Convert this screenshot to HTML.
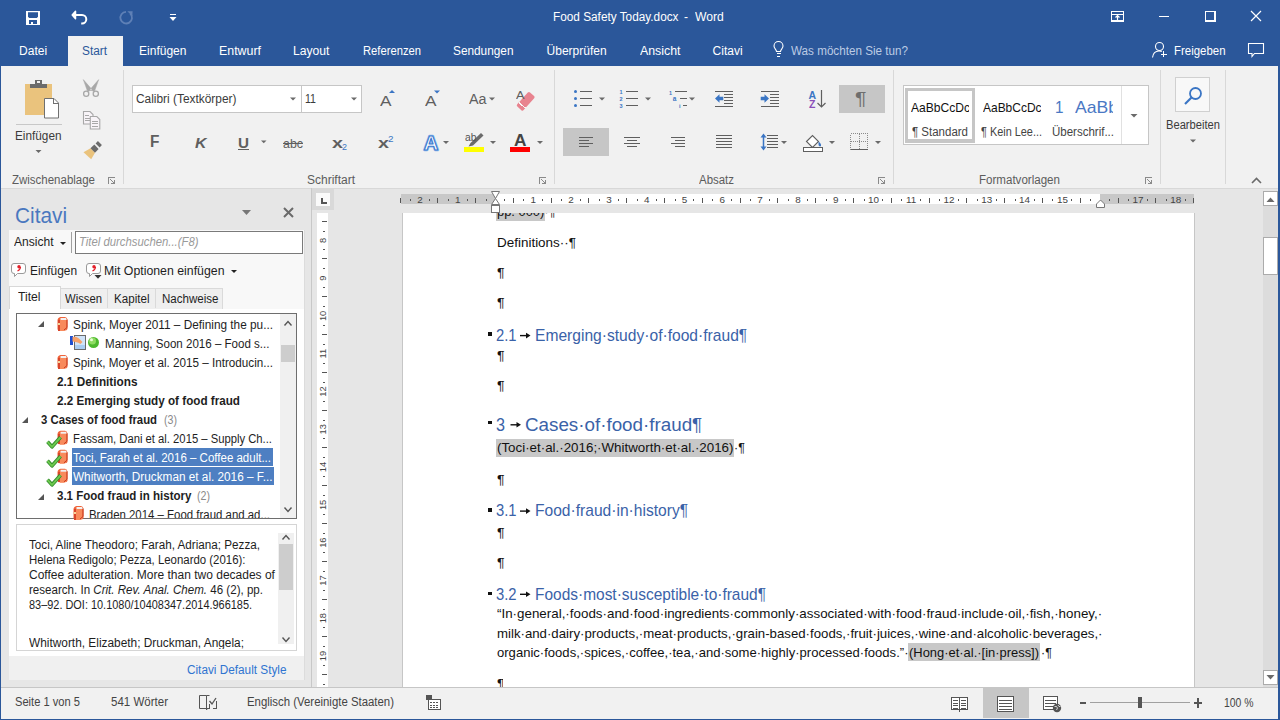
<!DOCTYPE html>
<html><head><meta charset="utf-8">
<style>
*{margin:0;padding:0;box-sizing:border-box}
html,body{width:1280px;height:720px;overflow:hidden}
body{position:relative;background:#e6e6e6;font-family:"Liberation Sans",sans-serif}
.t{position:absolute;white-space:nowrap;line-height:1;transform-origin:0 0}
.a{position:absolute}
svg.L{position:absolute;left:0;top:0}
</style></head><body>

<svg class="L" width="1280" height="720" viewBox="0 0 1280 720" shape-rendering="crispEdges"><rect x="0" y="0" width="1280" height="66" fill="#2b579a" />
<rect x="1" y="66" width="1277" height="122" fill="#f1f1f1" />
<rect x="1" y="188" width="1277" height="1" fill="#d8d8d8" />
<rect x="68" y="36" width="55" height="30" fill="#f1f1f1" />
<rect x="0" y="0" width="1" height="720" fill="#2b579a" />
<rect x="1278" y="0" width="2" height="720" fill="#2b579a" />
<rect x="0" y="719" width="1280" height="1" fill="#2b579a" />
<rect x="26" y="11" width="14" height="14" fill="#fff" />
<path d="M28 12.3h10v4.5l-1.2 1.2h-7.6l-1.2-1.2z" fill="#2b579a" shape-rendering="geometricPrecision"/>
<rect x="29" y="20" width="8" height="4" fill="#2b579a" />
<rect x="31" y="22" width="2" height="2" fill="#fff" />
<path d="M75.5 15h6.5a4.3 4.3 0 0 1 0 8.6h-0.8" fill="none" stroke="#fff" stroke-width="2" shape-rendering="geometricPrecision"/>
<path d="M75.5 11.2l-3.3 3.8l3.3 3.8z" fill="#fff" stroke="#fff" stroke-width="1.5" stroke-linejoin="round" shape-rendering="geometricPrecision"/>
<path d="M130.2 13.5a5.8 5.8 0 1 1 -4.2 -1.6" fill="none" stroke="#5f80b6" stroke-width="1.8" shape-rendering="geometricPrecision"/>
<path d="M127.3 11.2l5.3 0.1l-0.3 5z" fill="#5f80b6" shape-rendering="geometricPrecision"/>
<rect x="170" y="14" width="6" height="1.2" fill="#fff"/>
<path d="M169.5 17h7l-3.5 4z" fill="#fff" shape-rendering="geometricPrecision"/>
<rect x="1111.5" y="11.5" width="12" height="9.5" fill="none" stroke="#fff" stroke-width="1.2"/>
<rect x="1111" y="13.5" width="13" height="1.2" fill="#fff"/>
<path d="M1117.5 20.5v-5M1115.5 17.5l2-2l2 2" fill="none" stroke="#fff" stroke-width="1.2" shape-rendering="geometricPrecision"/>
<rect x="1159" y="16" width="10" height="1.2" fill="#fff"/>
<rect x="1205.5" y="11.5" width="9.5" height="9.5" fill="none" stroke="#fff" stroke-width="1.1"/>
<path d="M1251 11l10 10M1261 11l-10 10" stroke="#fff" stroke-width="1.2" shape-rendering="geometricPrecision"/>
<path d="M776.5 51.5c0-2-2.5-3-2.5-5.5a4.5 4.5 0 0 1 9 0c0 2.5-2.5 3.5-2.5 5.5z" fill="none" stroke="#fff" stroke-width="1.1" shape-rendering="geometricPrecision"/>
<rect x="776.5" y="53" width="4" height="1.1" fill="#fff"/><rect x="777" y="55.5" width="3" height="1.1" fill="#fff"/>
<circle cx="1159.5" cy="46.5" r="4" fill="none" stroke="#fff" stroke-width="1.1" shape-rendering="geometricPrecision"/>
<path d="M1152.5 57.5c0.5-4 3-6.5 6.5-6.5c1 0 2 0.2 2.8 0.6" fill="none" stroke="#fff" stroke-width="1.1" shape-rendering="geometricPrecision"/>
<rect x="1160.5" y="53.5" width="6" height="1.1" fill="#fff"/><rect x="1163" y="51" width="1.1" height="6" fill="#fff"/>
<path d="M1248.5 43.5h15v10h-9l-2.5 3v-3h-3.5z" fill="none" stroke="#fff" stroke-width="1.1" shape-rendering="geometricPrecision"/>
<rect x="123" y="70" width="1" height="114" fill="#d8d8d8" />
<rect x="554" y="70" width="1" height="114" fill="#d8d8d8" />
<rect x="893" y="70" width="1" height="114" fill="#d8d8d8" />
<rect x="1160" y="70" width="1" height="114" fill="#d8d8d8" />
<rect x="1225" y="70" width="1" height="114" fill="#d8d8d8" />
<path d="M108.5 183.5v-6h6" fill="none" stroke="#8a8a8a" stroke-width="1"/>
<path d="M110.5 179.5l3.5 3.5M114.5 180v3.5h-3.5" fill="none" stroke="#8a8a8a" stroke-width="1"/>
<path d="M539.5 183.5v-6h6" fill="none" stroke="#8a8a8a" stroke-width="1"/>
<path d="M541.5 179.5l3.5 3.5M545.5 180v3.5h-3.5" fill="none" stroke="#8a8a8a" stroke-width="1"/>
<path d="M878.5 183.5v-6h6" fill="none" stroke="#8a8a8a" stroke-width="1"/>
<path d="M880.5 179.5l3.5 3.5M884.5 180v3.5h-3.5" fill="none" stroke="#8a8a8a" stroke-width="1"/>
<path d="M1145.5 183.5v-6h6" fill="none" stroke="#8a8a8a" stroke-width="1"/>
<path d="M1147.5 179.5l3.5 3.5M1151.5 180v3.5h-3.5" fill="none" stroke="#8a8a8a" stroke-width="1"/>
<rect x="25" y="84" width="27" height="31" fill="#eac37d"/>
<rect x="30" y="84" width="17" height="4" fill="#6b6b6b"/>
<rect x="35" y="80" width="7" height="5" fill="#6b6b6b"/><rect x="37" y="81" width="3" height="2" fill="#f1f1f1"/>
<path d="M44.5 98.5h9.5l4.5 4.5v15h-14z" fill="#fff" stroke="#707070" stroke-width="1" shape-rendering="geometricPrecision"/>
<path d="M53.5 98.5v5h5" fill="none" stroke="#707070" stroke-width="1"/>
<rect x="16" y="124" width="46" height="1" fill="#c8c8c8" />
<path d="M35.5 150h6l-3 3z" fill="#6a6a6a" shape-rendering="geometricPrecision"/>
<g fill="none" stroke="#a8a8a8" stroke-width="1.3" shape-rendering="geometricPrecision"><circle cx="86.2" cy="93.8" r="2.6"/><circle cx="95.8" cy="93.8" r="2.6"/></g>
<path d="M87.6 91.6L83.3 79.6L92.2 89.8ZM94.4 91.6L98.7 79.6L89.8 89.8Z" fill="#a8a8a8" stroke="#a8a8a8" stroke-width="0.5" stroke-linejoin="round" shape-rendering="geometricPrecision"/>
<g fill="#f8f4f8" stroke="#a8a8a8" stroke-width="1.1" shape-rendering="geometricPrecision"><path d="M83.5 111.5h6.5l3 3v9.5h-9.5z"/><path d="M90.3 116.5h6.5l3 3v9.5h-9.5z"/></g>
<g stroke="#a8a8a8" stroke-width="1"><path d="M85 115.5h4M85 118h4.5M85 120.5h4.5M92 121h6M92 123.5h6M92 126h6"/></g>
<path d="M83.5 152.3L90.5 148.3L95 152.8L91.2 159.2Z" fill="#eac37d" shape-rendering="geometricPrecision"/>
<path d="M90.5 148.3L94.3 144.6L98.6 148.9L95 152.8Z" fill="#6b6b6b" shape-rendering="geometricPrecision"/>
<path d="M95.6 143.4L97.9 141.1L101.9 145.1L99.6 147.4Z" fill="#6b6b6b" shape-rendering="geometricPrecision"/>
<rect x="132.5" y="85.5" width="169" height="27" fill="#fff" stroke="#c6c6c6"/>
<rect x="301.5" y="85.5" width="60" height="27" fill="#fff" stroke="#c6c6c6"/>
<path d="M290 97.5h6l-3 3z" fill="#6a6a6a" shape-rendering="geometricPrecision"/><path d="M351 97.5h6l-3 3z" fill="#6a6a6a" shape-rendering="geometricPrecision"/>
<path d="M389 93h6l-3-3z" fill="#3a75c4" shape-rendering="geometricPrecision"/>
<path d="M434 90.5h6l-3 3z" fill="#3a75c4" shape-rendering="geometricPrecision"/>
<path d="M489 97.5h6l-3 3z" fill="#6a6a6a" shape-rendering="geometricPrecision"/>
<g transform="translate(525.7 101.3) rotate(-48)"><rect x="-9.5" y="-4.3" width="19" height="8.6" rx="1.6" fill="#e8838f" shape-rendering="geometricPrecision"/><rect x="-6" y="-4.3" width="1.3" height="8.6" fill="#f6f6f6"/></g>
<rect x="238" y="149" width="11" height="1.2" fill="#5f5f5f" />
<path d="M261 140.5h5.5l-2.75 2.75z" fill="#6a6a6a" shape-rendering="geometricPrecision"/>
<rect x="283" y="143" width="20" height="1.3" fill="#5f5f5f" />
<text x="423.8" y="149.5" font-family="Liberation Sans" font-size="20" font-weight="700" fill="#fff" stroke="#8dbaf0" stroke-width="2.4" stroke-linejoin="round" textLength="14.5" lengthAdjust="spacingAndGlyphs" shape-rendering="geometricPrecision">A</text>
<text x="423.8" y="149.5" font-family="Liberation Sans" font-size="20" font-weight="700" fill="#fff" stroke="#3c78cc" stroke-width="1.1" stroke-linejoin="round" textLength="14.5" lengthAdjust="spacingAndGlyphs" shape-rendering="geometricPrecision">A</text>
<path d="M443 141h6l-3 3z" fill="#6a6a6a" shape-rendering="geometricPrecision"/>
<path d="M468.5 146.5l2-3.5l10.5-10l2.5 2.5l-10.5 10z" fill="#6b6b6b" shape-rendering="geometricPrecision"/>
<rect x="464" y="147" width="20" height="5" fill="#ffff00" />
<path d="M490 141h6l-3 3z" fill="#6a6a6a" shape-rendering="geometricPrecision"/>
<rect x="510" y="147" width="20" height="5" fill="#ff0000" />
<path d="M537 141h6l-3 3z" fill="#6a6a6a" shape-rendering="geometricPrecision"/>
<circle cx="575.5" cy="91.5" r="1.5" fill="#3a75c4" shape-rendering="geometricPrecision"/>
<rect x="580" y="91" width="12" height="1" fill="#5f5f5f" />
<circle cx="575.5" cy="98.5" r="1.5" fill="#3a75c4" shape-rendering="geometricPrecision"/>
<rect x="580" y="98" width="12" height="1" fill="#5f5f5f" />
<circle cx="575.5" cy="105.5" r="1.5" fill="#3a75c4" shape-rendering="geometricPrecision"/>
<rect x="580" y="105" width="12" height="1" fill="#5f5f5f" />
<path d="M599 97.5h6l-3 3z" fill="#6a6a6a" shape-rendering="geometricPrecision"/>
<text x="619.5" y="94" font-family="Liberation Sans" font-size="5.5" font-weight="700" fill="#3a75c4">1</text>
<rect x="626" y="91" width="12" height="1" fill="#5f5f5f" />
<text x="619.5" y="101" font-family="Liberation Sans" font-size="5.5" font-weight="700" fill="#3a75c4">2</text>
<rect x="626" y="98" width="12" height="1" fill="#5f5f5f" />
<text x="619.5" y="108" font-family="Liberation Sans" font-size="5.5" font-weight="700" fill="#3a75c4">3</text>
<rect x="626" y="105" width="12" height="1" fill="#5f5f5f" />
<path d="M645 97.5h6l-3 3z" fill="#6a6a6a" shape-rendering="geometricPrecision"/>
<text x="669" y="94.5" font-family="Liberation Sans" font-size="5.5" font-weight="700" fill="#3a75c4">1</text>
<text x="672.8" y="101" font-family="Liberation Sans" font-size="6.5" font-weight="700" fill="#3a75c4">a</text>
<text x="679" y="107.5" font-family="Liberation Sans" font-size="5.5" font-weight="700" fill="#3a75c4">i</text>
<rect x="675" y="91" width="12" height="1" fill="#5f5f5f" />
<rect x="680" y="98" width="7" height="1" fill="#5f5f5f" />
<rect x="683" y="105" width="4" height="1" fill="#5f5f5f" />
<path d="M689 97.5h6l-3 3z" fill="#6a6a6a" shape-rendering="geometricPrecision"/>
<rect x="715" y="91" width="18" height="1" fill="#5f5f5f" />
<rect x="724" y="94" width="9" height="1" fill="#5f5f5f" />
<rect x="724" y="97" width="9" height="1" fill="#5f5f5f" />
<rect x="724" y="100" width="9" height="1" fill="#5f5f5f" />
<rect x="724" y="103" width="9" height="1" fill="#5f5f5f" />
<rect x="715" y="106" width="18" height="1" fill="#5f5f5f" />
<path d="M715 98.5l4.5-4.2v2.5h3.8v3.4h-3.8v2.5z" fill="#3a75c4" shape-rendering="geometricPrecision"/>
<rect x="761" y="91" width="18" height="1" fill="#5f5f5f" />
<rect x="770" y="94" width="9" height="1" fill="#5f5f5f" />
<rect x="770" y="97" width="9" height="1" fill="#5f5f5f" />
<rect x="770" y="100" width="9" height="1" fill="#5f5f5f" />
<rect x="770" y="103" width="9" height="1" fill="#5f5f5f" />
<rect x="761" y="106" width="18" height="1" fill="#5f5f5f" />
<path d="M769 98.5l-4.5-4.2v2.5h-3.8v3.4h3.8v2.5z" fill="#3a75c4" shape-rendering="geometricPrecision"/>
<text x="808.6" y="98.5" font-family="Liberation Sans" font-size="10.5" font-weight="700" fill="#3a75c4">A</text>
<text x="809" y="108.2" font-family="Liberation Sans" font-size="10.5" font-weight="700" fill="#8a4fb8">Z</text>
<path d="M821.5 90v17M817.5 103l4 4l4-4" fill="none" stroke="#5f5f5f" stroke-width="1.2" shape-rendering="geometricPrecision"/>
<rect x="839" y="85" width="46" height="28" fill="#c6c6c6" />
<rect x="563" y="128" width="46" height="28" fill="#c6c6c6" />
<rect x="579" y="136" width="0" height="1" fill="#5f5f5f" />
<rect x="579" y="139" width="0" height="1" fill="#5f5f5f" />
<rect x="579" y="142" width="0" height="1" fill="#5f5f5f" />
<rect x="579" y="145" width="0" height="1" fill="#5f5f5f" />
<rect x="579" y="137" width="14" height="1" fill="#5f5f5f" />
<rect x="579" y="140" width="10" height="1" fill="#5f5f5f" />
<rect x="579" y="143" width="14" height="1" fill="#5f5f5f" />
<rect x="579" y="146" width="10" height="1" fill="#5f5f5f" />
<rect x="624" y="137" width="16" height="1" fill="#5f5f5f" />
<rect x="627" y="140" width="10" height="1" fill="#5f5f5f" />
<rect x="624" y="143" width="16" height="1" fill="#5f5f5f" />
<rect x="627" y="146" width="10" height="1" fill="#5f5f5f" />
<rect x="671" y="137" width="14" height="1" fill="#5f5f5f" />
<rect x="675" y="140" width="10" height="1" fill="#5f5f5f" />
<rect x="671" y="143" width="14" height="1" fill="#5f5f5f" />
<rect x="675" y="146" width="10" height="1" fill="#5f5f5f" />
<rect x="716" y="135" width="16" height="1" fill="#5f5f5f" />
<rect x="716" y="138" width="16" height="1" fill="#5f5f5f" />
<rect x="716" y="141" width="16" height="1" fill="#5f5f5f" />
<rect x="716" y="144" width="16" height="1" fill="#5f5f5f" />
<rect x="716" y="147" width="16" height="1" fill="#5f5f5f" />
<path d="M763.5 136v12" fill="none" stroke="#3a75c4" stroke-width="1.5" shape-rendering="geometricPrecision"/>
<path d="M760.5 137.5l3-4l3 4zM760.5 146.5l3 4l3-4z" fill="#3a75c4" shape-rendering="geometricPrecision"/>
<rect x="767" y="135" width="11" height="1" fill="#5f5f5f" />
<rect x="767" y="138" width="11" height="1" fill="#5f5f5f" />
<rect x="767" y="141" width="11" height="1" fill="#5f5f5f" />
<rect x="767" y="144" width="11" height="1" fill="#5f5f5f" />
<rect x="767" y="147" width="11" height="1" fill="#5f5f5f" />
<path d="M781 141h6l-3 3z" fill="#6a6a6a" shape-rendering="geometricPrecision"/>
<path d="M806.5 141.5l6-6l6 6l-6 6z" fill="#fff" stroke="#5f5f5f" stroke-width="1.1" shape-rendering="geometricPrecision"/>
<path d="M818.5 141.5c1.5 1 3 3 2.5 4.5c-1 1-2.5 0-2.5-1.5z" fill="#3a75c4" shape-rendering="geometricPrecision"/>
<rect x="803.5" y="147.5" width="19" height="3.5" fill="#fff" stroke="#5f5f5f" stroke-width="1"/>
<path d="M829 141h6l-3 3z" fill="#6a6a6a" shape-rendering="geometricPrecision"/>
<rect x="850.5" y="133.5" width="17" height="16" fill="none" stroke="#8a8a8a" stroke-width="1" stroke-dasharray="1 1"/>
<path d="M859 134v16M851 141.5h17" stroke="#8a8a8a" stroke-width="1" stroke-dasharray="1 1"/>
<path d="M850.5 149.5h17.5" stroke="#5f5f5f" stroke-width="1"/>
<path d="M875 141h6l-3 3z" fill="#6a6a6a" shape-rendering="geometricPrecision"/>
<rect x="903.5" y="85.5" width="245" height="59" fill="#fff" stroke="#c6c6c6"/>
<rect x="1121" y="86" width="1" height="58" fill="#e1e1e1" />
<rect x="906.5" y="89.5" width="67" height="51.5" fill="none" stroke="#c6c6c6" stroke-width="3.2"/>
<path d="M1130.5 114h7l-3.5 3.5z" fill="#6a6a6a" shape-rendering="geometricPrecision"/>
<rect x="1175.5" y="77.5" width="34" height="34" fill="#f8f8f8" stroke="#d0d0d0"/>
<circle cx="1195.5" cy="93.5" r="5.5" fill="none" stroke="#3a75c4" stroke-width="1.8" shape-rendering="geometricPrecision"/>
<path d="M1191.5 97.5l-6.5 6.5" stroke="#3a75c4" stroke-width="2.2" shape-rendering="geometricPrecision"/>
<path d="M1190 139.5h6l-3 3z" fill="#6a6a6a" shape-rendering="geometricPrecision"/>
<path d="M1252 183l4.5-4.5l4.5 4.5" fill="none" stroke="#6a6a6a" stroke-width="1.6" shape-rendering="geometricPrecision"/>
<rect x="311" y="188" width="1" height="499" fill="#c8c8c8" />
<path d="M242 210h9l-4.5 5z" fill="#777" shape-rendering="geometricPrecision"/>
<path d="M284 208l9 9M293 208l-9 9" stroke="#6a6a6a" stroke-width="2" shape-rendering="geometricPrecision"/>
<rect x="9" y="230" width="295" height="426" fill="#f8f8f8" />
<path d="M60 242h6l-3 3z" fill="#222" shape-rendering="geometricPrecision"/>
<rect x="71" y="232" width="1" height="21" fill="#a0a0a0" />
<rect x="75.5" y="231.5" width="227" height="22" fill="#fff" stroke="#7a7a7a"/>
<path d="M14 263.5h9a2.5 2.5 0 0 1 2.5 2.5v5a2.5 2.5 0 0 1 -2.5 2.5h-5.5l-3 3v-3h-0.5a2.5 2.5 0 0 1 -2.5 -2.5v-5a2.5 2.5 0 0 1 2.5 -2.5z" fill="#fff" stroke="#9a9a9a" stroke-width="1" shape-rendering="geometricPrecision"/>
<circle cx="19" cy="266.8" r="1.7" fill="#e3202a" shape-rendering="geometricPrecision"/>
<path d="M20.5 267q0 2.5-3 4" fill="none" stroke="#e3202a" stroke-width="1.2" shape-rendering="geometricPrecision"/>
<path d="M89 263.5h9a2.5 2.5 0 0 1 2.5 2.5v5a2.5 2.5 0 0 1 -2.5 2.5h-5.5l-3 3v-3h-0.5a2.5 2.5 0 0 1 -2.5 -2.5v-5a2.5 2.5 0 0 1 2.5 -2.5z" fill="#fff" stroke="#9a9a9a" stroke-width="1" shape-rendering="geometricPrecision"/>
<circle cx="94" cy="266.8" r="1.7" fill="#e3202a" shape-rendering="geometricPrecision"/>
<path d="M95.5 267q0 2.5-3 4" fill="none" stroke="#e3202a" stroke-width="1.2" shape-rendering="geometricPrecision"/>
<path d="M94.5 275h7l-3.5 3.7z" fill="#333" shape-rendering="geometricPrecision"/>
<path d="M231 270h6l-3 3z" fill="#222" shape-rendering="geometricPrecision"/>
<rect x="60" y="288" width="163" height="21" fill="#efefef" />
<path d="M60.5 308.5v-20h162v20" fill="none" stroke="#dadada"/>
<rect x="107" y="289" width="1" height="19" fill="#dadada" />
<rect x="155" y="289" width="1" height="19" fill="#dadada" />
<path d="M9.5 309v-22.5h51v22.5" fill="#fff" stroke="#d8d8d8"/>
<rect x="10" y="287" width="50" height="23" fill="#fff" />
<rect x="9" y="309" width="295" height="347" fill="#fff" />
<rect x="16.5" y="313.5" width="280" height="205" fill="#fff" stroke="#6e6e6e"/>
<rect x="280" y="314" width="16" height="204" fill="#f0f0f0" />
<rect x="281" y="345" width="14" height="17" fill="#cdcdcd" />
<path d="M284.5 325.5l3.5-4l3.5 4" fill="none" stroke="#555" stroke-width="1.4" shape-rendering="geometricPrecision"/>
<path d="M284.5 507.5l3.5 4l3.5-4" fill="none" stroke="#555" stroke-width="1.4" shape-rendering="geometricPrecision"/>
<rect x="72" y="448" width="201" height="18" fill="#4e7fc2" />
<rect x="72" y="467" width="202" height="18" fill="#4e7fc2" />
<path d="M44 321v6h-6z" fill="#555" shape-rendering="geometricPrecision"/>
<path d="M57.5 320.5q0-3 3-3.5h4.5q2.5 0.3 2.5 3v9q-0.5 1.5-3 1.5h-4q-3 0-3-1.5z" fill="#f0643a" shape-rendering="geometricPrecision"/>
<path d="M60 320h6.5v9.5l-2.5 1.5h-4z" fill="#f88a5c" shape-rendering="geometricPrecision"/>
<path d="M60.5 318h5.5l1 2h-6.5z" fill="#f2f2f2" shape-rendering="geometricPrecision"/>
<rect x="58" y="320" width="2" height="10.5" fill="#d9452a"/>
<rect x="58" y="323" width="2" height="2" fill="#f6d39a"/>
<path d="M64 330l3-2.5v-8" fill="none" stroke="#c53a1e" stroke-width="1" shape-rendering="geometricPrecision"/>
<rect x="74.5" y="335.5" width="11" height="14" fill="#cfe3f8" stroke="#6a6a6a" shape-rendering="geometricPrecision"/>
<rect x="75" y="345" width="10" height="4" fill="#a9cdf2"/>
<rect x="70" y="336" width="2.5" height="9" fill="#1f4fd0" />
<path d="M72.5 337c3-1 6 0 10 5l-2 2c-3-2-5-2-8-2.5z" fill="#f7a26a" shape-rendering="geometricPrecision"/>
<circle cx="93.5" cy="342.5" r="5.5" fill="#4cb82e" shape-rendering="geometricPrecision"/>
<circle cx="92.5" cy="341" r="3.5" fill="#8edc62" shape-rendering="geometricPrecision"/>
<circle cx="91.5" cy="339.8" r="1.5" fill="#e8fbd8" shape-rendering="geometricPrecision"/>
<path d="M57.5 358.5q0-3 3-3.5h4.5q2.5 0.3 2.5 3v9q-0.5 1.5-3 1.5h-4q-3 0-3-1.5z" fill="#f0643a" shape-rendering="geometricPrecision"/>
<path d="M60 358h6.5v9.5l-2.5 1.5h-4z" fill="#f88a5c" shape-rendering="geometricPrecision"/>
<path d="M60.5 356h5.5l1 2h-6.5z" fill="#f2f2f2" shape-rendering="geometricPrecision"/>
<rect x="58" y="358" width="2" height="10.5" fill="#d9452a"/>
<rect x="58" y="361" width="2" height="2" fill="#f6d39a"/>
<path d="M64 368l3-2.5v-8" fill="none" stroke="#c53a1e" stroke-width="1" shape-rendering="geometricPrecision"/>
<path d="M28 417v6h-6z" fill="#555" shape-rendering="geometricPrecision"/>
<path d="M57.5 434.3q0-3 3-3.5h4.5q2.5 0.3 2.5 3v9q-0.5 1.5-3 1.5h-4q-3 0-3-1.5z" fill="#f0643a" shape-rendering="geometricPrecision"/>
<path d="M60 433.8h6.5v9.5l-2.5 1.5h-4z" fill="#f88a5c" shape-rendering="geometricPrecision"/>
<path d="M60.5 431.8h5.5l1 2h-6.5z" fill="#f2f2f2" shape-rendering="geometricPrecision"/>
<rect x="58" y="433.8" width="2" height="10.5" fill="#d9452a"/>
<rect x="58" y="436.8" width="2" height="2" fill="#f6d39a"/>
<path d="M64 443.8l3-2.5v-8" fill="none" stroke="#c53a1e" stroke-width="1" shape-rendering="geometricPrecision"/>
<path d="M47.5 441.8l4.5 5l8.5-9.5" fill="none" stroke="#2f8a2a" stroke-width="3.6" stroke-linejoin="round" shape-rendering="geometricPrecision"/>
<path d="M47.5 441.8l4.5 5l8.5-9.5" fill="none" stroke="#6cc84e" stroke-width="2" stroke-linejoin="round" shape-rendering="geometricPrecision"/>
<path d="M57.5 453.3q0-3 3-3.5h4.5q2.5 0.3 2.5 3v9q-0.5 1.5-3 1.5h-4q-3 0-3-1.5z" fill="#f0643a" shape-rendering="geometricPrecision"/>
<path d="M60 452.8h6.5v9.5l-2.5 1.5h-4z" fill="#f88a5c" shape-rendering="geometricPrecision"/>
<path d="M60.5 450.8h5.5l1 2h-6.5z" fill="#f2f2f2" shape-rendering="geometricPrecision"/>
<rect x="58" y="452.8" width="2" height="10.5" fill="#d9452a"/>
<rect x="58" y="455.8" width="2" height="2" fill="#f6d39a"/>
<path d="M64 462.8l3-2.5v-8" fill="none" stroke="#c53a1e" stroke-width="1" shape-rendering="geometricPrecision"/>
<path d="M47.5 460.8l4.5 5l8.5-9.5" fill="none" stroke="#2f8a2a" stroke-width="3.6" stroke-linejoin="round" shape-rendering="geometricPrecision"/>
<path d="M47.5 460.8l4.5 5l8.5-9.5" fill="none" stroke="#6cc84e" stroke-width="2" stroke-linejoin="round" shape-rendering="geometricPrecision"/>
<path d="M57.5 472.3q0-3 3-3.5h4.5q2.5 0.3 2.5 3v9q-0.5 1.5-3 1.5h-4q-3 0-3-1.5z" fill="#f0643a" shape-rendering="geometricPrecision"/>
<path d="M60 471.8h6.5v9.5l-2.5 1.5h-4z" fill="#f88a5c" shape-rendering="geometricPrecision"/>
<path d="M60.5 469.8h5.5l1 2h-6.5z" fill="#f2f2f2" shape-rendering="geometricPrecision"/>
<rect x="58" y="471.8" width="2" height="10.5" fill="#d9452a"/>
<rect x="58" y="474.8" width="2" height="2" fill="#f6d39a"/>
<path d="M64 481.8l3-2.5v-8" fill="none" stroke="#c53a1e" stroke-width="1" shape-rendering="geometricPrecision"/>
<path d="M47.5 479.8l4.5 5l8.5-9.5" fill="none" stroke="#2f8a2a" stroke-width="3.6" stroke-linejoin="round" shape-rendering="geometricPrecision"/>
<path d="M47.5 479.8l4.5 5l8.5-9.5" fill="none" stroke="#6cc84e" stroke-width="2" stroke-linejoin="round" shape-rendering="geometricPrecision"/>
<path d="M44 494v6h-6z" fill="#555" shape-rendering="geometricPrecision"/>
<path d="M73.5 509.5q0-3 3-3.5h4.5q2.5 0.3 2.5 3v9q-0.5 1.5-3 1.5h-4q-3 0-3-1.5z" fill="#f0643a" shape-rendering="geometricPrecision"/>
<path d="M76 509h6.5v9.5l-2.5 1.5h-4z" fill="#f88a5c" shape-rendering="geometricPrecision"/>
<path d="M76.5 507h5.5l1 2h-6.5z" fill="#f2f2f2" shape-rendering="geometricPrecision"/>
<rect x="74" y="509" width="2" height="10.5" fill="#d9452a"/>
<rect x="74" y="512" width="2" height="2" fill="#f6d39a"/>
<path d="M80 519l3-2.5v-8" fill="none" stroke="#c53a1e" stroke-width="1" shape-rendering="geometricPrecision"/>
<rect x="16.5" y="524.5" width="280" height="126" fill="#fff" stroke="#d5d5d5"/>
<rect x="278" y="533" width="16" height="111" fill="#f0f0f0" />
<rect x="279" y="544" width="14" height="46" fill="#cdcdcd" />
<path d="M282.5 539.5l3.5-4l3.5 4" fill="none" stroke="#555" stroke-width="1.4" shape-rendering="geometricPrecision"/>
<path d="M282.5 637.5l3.5 4l3.5-4" fill="none" stroke="#555" stroke-width="1.4" shape-rendering="geometricPrecision"/>
<rect x="9" y="656" width="295" height="24" fill="#f0f0f0" />
<rect x="304" y="230" width="1" height="450" fill="#dcdcdc" />
<rect x="312" y="189" width="22" height="21" fill="#d9d9d9" />
<rect x="316" y="193" width="14" height="13" fill="#fafafa" />
<rect x="321" y="198" width="2" height="6" fill="#555" />
<rect x="321" y="202" width="6" height="2" fill="#555" />
<rect x="402" y="213" width="793" height="474" fill="#c6c6c6" />
<rect x="403" y="213" width="791" height="474" fill="#fff" />
<rect x="401" y="194" width="94.5" height="10" fill="#c8c8c8" />
<rect x="495.5" y="194" width="604.8" height="10" fill="#fff" />
<rect x="1100.3" y="194" width="93.7" height="10" fill="#c8c8c8" />
<rect x="400" y="198" width="1" height="5" fill="#555" />
<rect x="410" y="198.5" width="1" height="2" fill="#555" />
<text x="419.9" y="203" font-family="Liberation Sans" font-size="9.9" fill="#444" text-anchor="middle">2</text>
<rect x="429" y="198.5" width="1" height="2" fill="#555" />
<rect x="437" y="198" width="1" height="5" fill="#555" />
<rect x="448" y="198.5" width="1" height="2" fill="#555" />
<text x="457.7" y="203" font-family="Liberation Sans" font-size="9.9" fill="#444" text-anchor="middle">1</text>
<rect x="467" y="198.5" width="1" height="2" fill="#555" />
<rect x="475" y="198" width="1" height="5" fill="#555" />
<rect x="486" y="198.5" width="1" height="2" fill="#555" />
<rect x="504" y="198.5" width="1" height="2" fill="#555" />
<rect x="513" y="198" width="1" height="5" fill="#555" />
<rect x="523" y="198.5" width="1" height="2" fill="#555" />
<text x="533.3" y="203" font-family="Liberation Sans" font-size="9.9" fill="#444" text-anchor="middle">1</text>
<rect x="542" y="198.5" width="1" height="2" fill="#555" />
<rect x="551" y="198" width="1" height="5" fill="#555" />
<rect x="561" y="198.5" width="1" height="2" fill="#555" />
<text x="571.1" y="203" font-family="Liberation Sans" font-size="9.9" fill="#444" text-anchor="middle">2</text>
<rect x="580" y="198.5" width="1" height="2" fill="#555" />
<rect x="588" y="198" width="1" height="5" fill="#555" />
<rect x="599" y="198.5" width="1" height="2" fill="#555" />
<text x="608.9" y="203" font-family="Liberation Sans" font-size="9.9" fill="#444" text-anchor="middle">3</text>
<rect x="618" y="198.5" width="1" height="2" fill="#555" />
<rect x="626" y="198" width="1" height="5" fill="#555" />
<rect x="637" y="198.5" width="1" height="2" fill="#555" />
<text x="646.7" y="203" font-family="Liberation Sans" font-size="9.9" fill="#444" text-anchor="middle">4</text>
<rect x="656" y="198.5" width="1" height="2" fill="#555" />
<rect x="664" y="198" width="1" height="5" fill="#555" />
<rect x="675" y="198.5" width="1" height="2" fill="#555" />
<text x="684.5" y="203" font-family="Liberation Sans" font-size="9.9" fill="#444" text-anchor="middle">5</text>
<rect x="693" y="198.5" width="1" height="2" fill="#555" />
<rect x="702" y="198" width="1" height="5" fill="#555" />
<rect x="712" y="198.5" width="1" height="2" fill="#555" />
<text x="722.3" y="203" font-family="Liberation Sans" font-size="9.9" fill="#444" text-anchor="middle">6</text>
<rect x="731" y="198.5" width="1" height="2" fill="#555" />
<rect x="740" y="198" width="1" height="5" fill="#555" />
<rect x="750" y="198.5" width="1" height="2" fill="#555" />
<text x="760.1" y="203" font-family="Liberation Sans" font-size="9.9" fill="#444" text-anchor="middle">7</text>
<rect x="769" y="198.5" width="1" height="2" fill="#555" />
<rect x="777" y="198" width="1" height="5" fill="#555" />
<rect x="788" y="198.5" width="1" height="2" fill="#555" />
<text x="797.9" y="203" font-family="Liberation Sans" font-size="9.9" fill="#444" text-anchor="middle">8</text>
<rect x="807" y="198.5" width="1" height="2" fill="#555" />
<rect x="815" y="198" width="1" height="5" fill="#555" />
<rect x="826" y="198.5" width="1" height="2" fill="#555" />
<text x="835.7" y="203" font-family="Liberation Sans" font-size="9.9" fill="#444" text-anchor="middle">9</text>
<rect x="845" y="198.5" width="1" height="2" fill="#555" />
<rect x="853" y="198" width="1" height="5" fill="#555" />
<rect x="864" y="198.5" width="1" height="2" fill="#555" />
<text x="873.5" y="203" font-family="Liberation Sans" font-size="9.9" fill="#444" text-anchor="middle">10</text>
<rect x="882" y="198.5" width="1" height="2" fill="#555" />
<rect x="891" y="198" width="1" height="5" fill="#555" />
<rect x="901" y="198.5" width="1" height="2" fill="#555" />
<text x="911.2" y="203" font-family="Liberation Sans" font-size="9.9" fill="#444" text-anchor="middle">11</text>
<rect x="920" y="198.5" width="1" height="2" fill="#555" />
<rect x="929" y="198" width="1" height="5" fill="#555" />
<rect x="939" y="198.5" width="1" height="2" fill="#555" />
<text x="949.0" y="203" font-family="Liberation Sans" font-size="9.9" fill="#444" text-anchor="middle">12</text>
<rect x="958" y="198.5" width="1" height="2" fill="#555" />
<rect x="966" y="198" width="1" height="5" fill="#555" />
<rect x="977" y="198.5" width="1" height="2" fill="#555" />
<text x="986.8" y="203" font-family="Liberation Sans" font-size="9.9" fill="#444" text-anchor="middle">13</text>
<rect x="996" y="198.5" width="1" height="2" fill="#555" />
<rect x="1004" y="198" width="1" height="5" fill="#555" />
<rect x="1015" y="198.5" width="1" height="2" fill="#555" />
<text x="1024.6" y="203" font-family="Liberation Sans" font-size="9.9" fill="#444" text-anchor="middle">14</text>
<rect x="1034" y="198.5" width="1" height="2" fill="#555" />
<rect x="1042" y="198" width="1" height="5" fill="#555" />
<rect x="1052" y="198.5" width="1" height="2" fill="#555" />
<text x="1062.4" y="203" font-family="Liberation Sans" font-size="9.9" fill="#444" text-anchor="middle">15</text>
<rect x="1071" y="198.5" width="1" height="2" fill="#555" />
<rect x="1080" y="198" width="1" height="5" fill="#555" />
<rect x="1090" y="198.5" width="1" height="2" fill="#555" />
<rect x="1109" y="198.5" width="1" height="2" fill="#555" />
<rect x="1118" y="198" width="1" height="5" fill="#555" />
<rect x="1128" y="198.5" width="1" height="2" fill="#555" />
<text x="1138.0" y="203" font-family="Liberation Sans" font-size="9.9" fill="#444" text-anchor="middle">17</text>
<rect x="1147" y="198.5" width="1" height="2" fill="#555" />
<rect x="1155" y="198" width="1" height="5" fill="#555" />
<rect x="1166" y="198.5" width="1" height="2" fill="#555" />
<text x="1175.8" y="203" font-family="Liberation Sans" font-size="9.9" fill="#444" text-anchor="middle">18</text>
<rect x="1185" y="198.5" width="1" height="2" fill="#555" />
<rect x="1193" y="198" width="1" height="5" fill="#555" />
<path d="M491.5 191.5h8l-4 7l-4-7z" fill="#fff" stroke="#777" stroke-width="1" shape-rendering="geometricPrecision"/>
<path d="M495.5 198.5l4 6h-8z" fill="#fff" stroke="#777" stroke-width="1" shape-rendering="geometricPrecision"/>
<rect x="491.5" y="205.5" width="8" height="6.5" fill="#fff" stroke="#777" stroke-width="1"/>
<path d="M1096.5 207.5v-3.5l4-4l4 4v3.5z" fill="#fff" stroke="#777" stroke-width="1" shape-rendering="geometricPrecision"/>
<rect x="317" y="213" width="11" height="474" fill="#fff" />
<rect x="322" y="221" width="5" height="1" fill="#555" />
<rect x="323" y="231" width="2" height="1" fill="#555" />
<text x="0" y="0" transform="translate(326.0 240.3) rotate(-90)" font-family="Liberation Sans" font-size="9.3" fill="#444" text-anchor="middle">8</text>
<rect x="323" y="249" width="2" height="1" fill="#555" />
<rect x="322" y="258" width="5" height="1" fill="#555" />
<rect x="323" y="268" width="2" height="1" fill="#555" />
<text x="0" y="0" transform="translate(326.0 278.1) rotate(-90)" font-family="Liberation Sans" font-size="9.3" fill="#444" text-anchor="middle">9</text>
<rect x="323" y="287" width="2" height="1" fill="#555" />
<rect x="322" y="296" width="5" height="1" fill="#555" />
<rect x="323" y="306" width="2" height="1" fill="#555" />
<text x="0" y="0" transform="translate(326.0 315.9) rotate(-90)" font-family="Liberation Sans" font-size="9.3" fill="#444" text-anchor="middle">10</text>
<rect x="323" y="325" width="2" height="1" fill="#555" />
<rect x="322" y="334" width="5" height="1" fill="#555" />
<rect x="323" y="344" width="2" height="1" fill="#555" />
<text x="0" y="0" transform="translate(326.0 353.7) rotate(-90)" font-family="Liberation Sans" font-size="9.3" fill="#444" text-anchor="middle">11</text>
<rect x="323" y="363" width="2" height="1" fill="#555" />
<rect x="322" y="372" width="5" height="1" fill="#555" />
<rect x="323" y="382" width="2" height="1" fill="#555" />
<text x="0" y="0" transform="translate(326.0 391.5) rotate(-90)" font-family="Liberation Sans" font-size="9.3" fill="#444" text-anchor="middle">12</text>
<rect x="323" y="401" width="2" height="1" fill="#555" />
<rect x="322" y="410" width="5" height="1" fill="#555" />
<rect x="323" y="420" width="2" height="1" fill="#555" />
<text x="0" y="0" transform="translate(326.0 429.3) rotate(-90)" font-family="Liberation Sans" font-size="9.3" fill="#444" text-anchor="middle">13</text>
<rect x="323" y="438" width="2" height="1" fill="#555" />
<rect x="322" y="447" width="5" height="1" fill="#555" />
<rect x="323" y="457" width="2" height="1" fill="#555" />
<text x="0" y="0" transform="translate(326.0 467.1) rotate(-90)" font-family="Liberation Sans" font-size="9.3" fill="#444" text-anchor="middle">14</text>
<rect x="323" y="476" width="2" height="1" fill="#555" />
<rect x="322" y="485" width="5" height="1" fill="#555" />
<rect x="323" y="495" width="2" height="1" fill="#555" />
<text x="0" y="0" transform="translate(326.0 504.9) rotate(-90)" font-family="Liberation Sans" font-size="9.3" fill="#444" text-anchor="middle">15</text>
<rect x="323" y="514" width="2" height="1" fill="#555" />
<rect x="322" y="523" width="5" height="1" fill="#555" />
<rect x="323" y="533" width="2" height="1" fill="#555" />
<text x="0" y="0" transform="translate(326.0 542.7) rotate(-90)" font-family="Liberation Sans" font-size="9.3" fill="#444" text-anchor="middle">16</text>
<rect x="323" y="552" width="2" height="1" fill="#555" />
<rect x="322" y="561" width="5" height="1" fill="#555" />
<rect x="323" y="571" width="2" height="1" fill="#555" />
<text x="0" y="0" transform="translate(326.0 580.5) rotate(-90)" font-family="Liberation Sans" font-size="9.3" fill="#444" text-anchor="middle">17</text>
<rect x="323" y="590" width="2" height="1" fill="#555" />
<rect x="322" y="599" width="5" height="1" fill="#555" />
<rect x="323" y="609" width="2" height="1" fill="#555" />
<text x="0" y="0" transform="translate(326.0 618.2) rotate(-90)" font-family="Liberation Sans" font-size="9.3" fill="#444" text-anchor="middle">18</text>
<rect x="323" y="627" width="2" height="1" fill="#555" />
<rect x="322" y="636" width="5" height="1" fill="#555" />
<rect x="323" y="646" width="2" height="1" fill="#555" />
<text x="0" y="0" transform="translate(326.0 656.0) rotate(-90)" font-family="Liberation Sans" font-size="9.3" fill="#444" text-anchor="middle">19</text>
<rect x="323" y="665" width="2" height="1" fill="#555" />
<rect x="322" y="674" width="5" height="1" fill="#555" />
<rect x="323" y="684" width="2" height="1" fill="#555" />
<rect x="1263" y="191" width="15" height="496" fill="#dcdcdc" />
<rect x="1263.5" y="191.5" width="14" height="14" fill="#fff" stroke="#ababab"/>
<path d="M1266.5 202h8l-4-4.5z" fill="#6a6a6a" shape-rendering="geometricPrecision"/>
<rect x="1263.5" y="237.5" width="14" height="37" fill="#fff" stroke="#ababab"/>
<rect x="1263.5" y="670.5" width="14" height="14" fill="#fff" stroke="#ababab"/>
<path d="M1266.5 675h8l-4 4.5z" fill="#6a6a6a" shape-rendering="geometricPrecision"/>
<rect x="496" y="213" width="49" height="8" fill="#c8c8c8" />
<rect x="496" y="439" width="238" height="18" fill="#c8c8c8" />
<rect x="908" y="643" width="132" height="17.5" fill="#c8c8c8" />
<rect x="488" y="332" width="3.7" height="3.7" fill="#111" />
<path d="M520 335.59999999999997h7" fill="none" stroke="#111" stroke-width="1.4" shape-rendering="geometricPrecision"/>
<path d="M526 332.79999999999995l4.5 2.8l-4.5 2.8z" fill="#111" shape-rendering="geometricPrecision"/>
<rect x="488" y="420.5" width="3.7" height="3.7" fill="#111" />
<path d="M510.5 424.8h7" fill="none" stroke="#111" stroke-width="1.4" shape-rendering="geometricPrecision"/>
<path d="M516.5 422.0l4.5 2.8l-4.5 2.8z" fill="#111" shape-rendering="geometricPrecision"/>
<rect x="488" y="508" width="3.7" height="3.7" fill="#111" />
<path d="M520 511.09999999999997h7" fill="none" stroke="#111" stroke-width="1.4" shape-rendering="geometricPrecision"/>
<path d="M526 508.29999999999995l4.5 2.8l-4.5 2.8z" fill="#111" shape-rendering="geometricPrecision"/>
<rect x="488" y="591.5" width="3.7" height="3.7" fill="#111" />
<path d="M520 594.3000000000001h7" fill="none" stroke="#111" stroke-width="1.4" shape-rendering="geometricPrecision"/>
<path d="M526 591.5000000000001l4.5 2.8l-4.5 2.8z" fill="#111" shape-rendering="geometricPrecision"/>
<rect x="1" y="687" width="1277" height="1" fill="#c6c6c6" />
<rect x="1" y="688" width="1277" height="31" fill="#f1f1f1" />
<path d="M199.5 695.5h7v13h-7zM206.5 695.5h3M206.5 708.5l0.5 1" fill="none" stroke="#555" stroke-width="1" shape-rendering="geometricPrecision"/>
<path d="M206.5 697v12.5" stroke="#555" stroke-width="1"/>
<path d="M209.5 704v4.5h-3M216.5 701v7.5h-4" fill="none" stroke="#555" stroke-width="1"/>
<path d="M209.5 701l2.5 3l4-6" fill="none" stroke="#555" stroke-width="1.3" shape-rendering="geometricPrecision"/>
<rect x="428.5" y="699.5" width="12" height="10" fill="#fff" stroke="#555" stroke-width="1"/>
<rect x="430" y="702" width="2" height="1.2" fill="#555" />
<rect x="433" y="702" width="2" height="1.2" fill="#555" />
<rect x="436" y="702" width="2" height="1.2" fill="#555" />
<rect x="430" y="704.5" width="2" height="1.2" fill="#555" />
<rect x="433" y="704.5" width="2" height="1.2" fill="#555" />
<rect x="436" y="704.5" width="2" height="1.2" fill="#555" />
<rect x="430" y="707" width="2" height="1.2" fill="#555" />
<rect x="433" y="707" width="2" height="1.2" fill="#555" />
<rect x="436" y="707" width="2" height="1.2" fill="#555" />
<rect x="426" y="695" width="6" height="5" fill="#555" />
<rect x="983" y="688" width="46" height="30" fill="#c6c6c6" />
<path d="M951.5 697.5h8v12h-8zM959.5 697.5h8v12h-8z" fill="#fff" stroke="#555" stroke-width="1"/>
<rect x="953" y="700" width="5" height="1" fill="#555" />
<rect x="961" y="700" width="5" height="1" fill="#555" />
<rect x="953" y="702.5" width="5" height="1" fill="#555" />
<rect x="961" y="702.5" width="5" height="1" fill="#555" />
<rect x="953" y="705" width="5" height="1" fill="#555" />
<rect x="961" y="705" width="5" height="1" fill="#555" />
<rect x="953" y="707.5" width="5" height="1" fill="#555" />
<rect x="961" y="707.5" width="5" height="1" fill="#555" />
<path d="M959.5 709v2.5" stroke="#555" stroke-width="1"/>
<rect x="997.5" y="696.5" width="16" height="15" fill="#fff" stroke="#555" stroke-width="1"/>
<rect x="999" y="699.5" width="13" height="1" fill="#555" />
<rect x="999" y="702.5" width="13" height="1" fill="#555" />
<rect x="999" y="705.5" width="13" height="1" fill="#555" />
<rect x="999" y="708.5" width="13" height="1" fill="#555" />
<rect x="1043.5" y="696.5" width="14" height="13" fill="#fff" stroke="#555" stroke-width="1"/>
<rect x="1045" y="699.5" width="11" height="1" fill="#555" />
<rect x="1045" y="702.5" width="11" height="1" fill="#555" />
<rect x="1045" y="705.5" width="11" height="1" fill="#555" />
<circle cx="1057" cy="708" r="4.2" fill="#555" shape-rendering="geometricPrecision"/>
<path d="M1054.5 706.5h2l1 1.5l-1 2M1058 705l1 1.5l1.5 0" fill="none" stroke="#f1f1f1" stroke-width="0.8" shape-rendering="geometricPrecision"/>
<rect x="1080" y="702" width="6" height="2" fill="#555" />
<rect x="1090" y="702" width="100" height="1" fill="#a0a0a0" />
<rect x="1138" y="697" width="4" height="11" fill="#555" />
<rect x="1194" y="702" width="8" height="2" fill="#555" />
<rect x="1197" y="698" width="2" height="9.5" fill="#555" /></svg>
<div class="t" id="t0" style="left:552.60px;top:11.18px;font-size:12.5px;color:#fff;transform:scaleX(0.9439);">Food Safety Today.docx</div>
<div class="t" id="t1" style="left:684.20px;top:11.18px;font-size:12.5px;color:#fff;transform:scaleX(0.9588);">-</div>
<div class="t" id="t2" style="left:695.30px;top:11.18px;font-size:12.5px;color:#fff;transform:scaleX(0.9716);">Word</div>
<div class="t" id="t3" style="left:19.10px;top:45.40px;font-size:12px;color:#fff;">Datei</div>
<div class="t" id="t4" style="left:82.10px;top:45.40px;font-size:12px;color:#2b579a;transform:scaleX(0.9864);">Start</div>
<div class="t" id="t5" style="left:139.10px;top:45.40px;font-size:12px;color:#fff;transform:scaleX(1.0026);">Einfügen</div>
<div class="t" id="t6" style="left:219.10px;top:45.40px;font-size:12px;color:#fff;transform:scaleX(1.0323);">Entwurf</div>
<div class="t" id="t7" style="left:293.10px;top:45.40px;font-size:12px;color:#fff;transform:scaleX(1.0130);">Layout</div>
<div class="t" id="t8" style="left:362.60px;top:45.40px;font-size:12px;color:#fff;transform:scaleX(0.9348);">Referenzen</div>
<div class="t" id="t9" style="left:453.10px;top:45.40px;font-size:12px;color:#fff;transform:scaleX(0.9852);">Sendungen</div>
<div class="t" id="t10" style="left:546.60px;top:45.40px;font-size:12px;color:#fff;">Überprüfen</div>
<div class="t" id="t11" style="left:639.60px;top:45.40px;font-size:12px;color:#fff;transform:scaleX(1.0290);">Ansicht</div>
<div class="t" id="t12" style="left:712.60px;top:45.40px;font-size:12px;color:#fff;">Citavi</div>
<div class="t" id="t13" style="left:791.00px;top:45.40px;font-size:12px;color:#bccbe4;transform:scaleX(0.9727);">Was möchten Sie tun?</div>
<div class="t" id="t14" style="left:1173.70px;top:44.80px;font-size:12px;color:#fff;transform:scaleX(0.9529);">Freigeben</div>
<div class="t" id="t15" style="left:11.80px;top:173.80px;font-size:12px;color:#5c5c5c;transform:scaleX(0.9571);">Zwischenablage</div>
<div class="t" id="t16" style="left:307.00px;top:173.80px;font-size:12px;color:#5c5c5c;">Schriftart</div>
<div class="t" id="t17" style="left:699.00px;top:173.80px;font-size:12px;color:#5c5c5c;transform:scaleX(0.9540);">Absatz</div>
<div class="t" id="t18" style="left:978.50px;top:173.80px;font-size:12px;color:#5c5c5c;transform:scaleX(0.9637);">Formatvorlagen</div>
<div class="t" id="t19" style="left:14.80px;top:129.80px;font-size:12px;color:#3b3b3b;transform:scaleX(0.9815);">Einfügen</div>
<div class="t" id="t20" style="left:135.50px;top:92.80px;font-size:12px;color:#3b3b3b;transform:scaleX(0.9915);">Calibri (Textkörper)</div>
<div class="t" id="t21" style="left:304.50px;top:92.80px;font-size:12px;color:#3b3b3b;transform:scaleX(0.8822);">11</div>
<div class="t" id="t22" style="left:379.50px;top:93.25px;font-size:15px;color:#5f5f5f;transform:scaleX(1.1482);">A</div>
<div class="t" id="t23" style="left:424.50px;top:93.25px;font-size:15px;color:#5f5f5f;transform:scaleX(1.1482);">A</div>
<div class="t" id="t24" style="left:468.50px;top:92.10px;font-size:14px;color:#5f5f5f;transform:scaleX(1.0219);">Aa</div>
<div class="t" id="t25" style="left:515.50px;top:90.22px;font-size:11.5px;color:#5f5f5f;transform:scaleX(1.1079);">A</div>
<div class="t" id="t26" style="left:150.30px;top:134.20px;font-size:16px;color:#5f5f5f;font-weight:700;transform:scaleX(0.9610);">F</div>
<div class="t" id="t27" style="left:194.50px;top:134.75px;font-size:15px;color:#5f5f5f;font-weight:700;font-style:italic;transform:scaleX(1.0605);">K</div>
<div class="t" id="t28" style="left:237.50px;top:134.75px;font-size:15px;color:#5f5f5f;font-weight:700;transform:scaleX(1.0144);">U</div>
<div class="t" id="t29" style="left:283.00px;top:137.45px;font-size:13px;color:#5f5f5f;transform:scaleX(0.9538);">abc</div>
<div class="t" id="t30" style="left:331.50px;top:135.32px;font-size:15.5px;color:#5f5f5f;font-weight:700;transform:scaleX(1.2754);">x</div>
<div class="t" id="t31" style="left:341.80px;top:142.85px;font-size:9px;color:#3a75c4;transform:scaleX(0.9969);">2</div>
<div class="t" id="t32" style="left:378.00px;top:135.32px;font-size:15.5px;color:#5f5f5f;font-weight:700;transform:scaleX(1.2754);">x</div>
<div class="t" id="t33" style="left:387.50px;top:134.85px;font-size:9px;color:#3a75c4;transform:scaleX(1.0966);">2</div>
<div class="t" id="t34" style="left:464.50px;top:131.65px;font-size:11px;color:#555;transform:scaleX(0.9388);">ab</div>
<div class="t" id="t35" style="left:513.50px;top:131.55px;font-size:17px;color:#444;font-weight:700;transform:scaleX(1.0178);">A</div>
<div class="t" id="t36" style="left:855.30px;top:89.50px;font-size:18px;color:#6e6e6e;transform:scaleX(1.1890);">¶</div>
<div class="a" style="left:908px;top:95px;width:61px;height:25px;overflow:hidden"><div class="t" id="t37" style="left:2.50px;top:5.95px;font-size:13px;color:#111;transform:scaleX(0.9280);">AaBbCcDc</div></div>
<div class="t" id="t38" style="left:912.00px;top:125.80px;font-size:12px;color:#444;transform:scaleX(0.9575);">¶ Standard</div>
<div class="a" style="left:980px;top:95px;width:61px;height:25px;overflow:hidden"><div class="t" id="t39" style="left:2.50px;top:5.95px;font-size:13px;color:#111;transform:scaleX(0.9201);">AaBbCcDc</div></div>
<div class="t" id="t40" style="left:981.00px;top:125.80px;font-size:12px;color:#444;transform:scaleX(0.9083);">¶ Kein Lee...</div>
<div class="t" id="t41" style="left:1055.00px;top:98.55px;font-size:17px;color:#4a78c4;transform:scaleX(0.8977);">1</div>
<div class="a" style="left:1050px;top:95px;width:63px;height:25px;overflow:hidden"><div class="t" id="t42" style="left:25.30px;top:3.55px;font-size:17px;color:#4a78c4;transform:scaleX(1.0338);">AaBb</div></div>
<div class="t" id="t43" style="left:1052.00px;top:125.80px;font-size:12px;color:#444;transform:scaleX(0.9585);">Überschrif...</div>
<div class="t" id="t44" style="left:1166.00px;top:118.80px;font-size:12px;color:#3b3b3b;transform:scaleX(0.9303);">Bearbeiten</div>
<div class="t" id="t45" style="left:15.00px;top:205.92px;font-size:21.5px;color:#4a78bf;transform:scaleX(0.9672);">Citavi</div>
<div class="t" id="t46" style="left:13.70px;top:235.80px;font-size:12px;color:#1e1e1e;transform:scaleX(1.0036);">Ansicht</div>
<div class="t" id="t47" style="left:79.00px;top:235.80px;font-size:12px;color:#9a9a9a;font-style:italic;transform:scaleX(0.9438);">Titel durchsuchen...(F8)</div>
<div class="t" id="t48" style="left:29.70px;top:264.80px;font-size:12px;color:#1e1e1e;transform:scaleX(0.9921);">Einfügen</div>
<div class="t" id="t49" style="left:103.50px;top:264.80px;font-size:12px;color:#1e1e1e;transform:scaleX(1.0262);">Mit Optionen einfügen</div>
<div class="t" id="t50" style="left:18.00px;top:290.80px;font-size:12px;color:#1e1e1e;transform:scaleX(1.0119);">Titel</div>
<div class="t" id="t51" style="left:64.70px;top:293.10px;font-size:12px;color:#1e1e1e;transform:scaleX(0.9404);">Wissen</div>
<div class="t" id="t52" style="left:114.00px;top:293.10px;font-size:12px;color:#1e1e1e;transform:scaleX(0.9672);">Kapitel</div>
<div class="t" id="t53" style="left:161.50px;top:293.10px;font-size:12px;color:#1e1e1e;transform:scaleX(0.9625);">Nachweise</div>
<div class="t" id="t54" style="left:72.50px;top:318.60px;font-size:12px;color:#1e1e1e;transform:scaleX(0.9841);">Spink, Moyer 2011 – Defining the pu...</div>
<div class="t" id="t55" style="left:104.50px;top:337.60px;font-size:12px;color:#1e1e1e;transform:scaleX(0.9631);">Manning, Soon 2016 – Food s...</div>
<div class="t" id="t56" style="left:72.50px;top:356.60px;font-size:12px;color:#1e1e1e;transform:scaleX(0.9735);">Spink, Moyer et al. 2015 – Introducin...</div>
<div class="t" id="t57" style="left:56.50px;top:375.60px;font-size:12px;color:#1e1e1e;font-weight:700;transform:scaleX(0.9815);">2.1 Definitions</div>
<div class="t" id="t58" style="left:56.50px;top:394.60px;font-size:12px;color:#1e1e1e;font-weight:700;transform:scaleX(0.9733);">2.2 Emerging study of food fraud</div>
<div class="t" id="t59" style="left:40.50px;top:414.10px;font-size:12px;color:#1e1e1e;font-weight:700;transform:scaleX(0.9455);">3 Cases of food fraud</div>
<div class="t" id="t60" style="left:163.50px;top:414.10px;font-size:12px;color:#8a8a8a;transform:scaleX(0.8860);">(3)</div>
<div class="t" id="t61" style="left:72.50px;top:432.60px;font-size:12px;color:#1e1e1e;transform:scaleX(0.9382);">Fassam, Dani et al. 2015 – Supply Ch...</div>
<div class="t" id="t62" style="left:72.50px;top:451.60px;font-size:12px;color:#fff;transform:scaleX(0.9585);">Toci, Farah et al. 2016 – Coffee adult...</div>
<div class="t" id="t63" style="left:72.50px;top:470.60px;font-size:12px;color:#fff;transform:scaleX(0.9807);">Whitworth, Druckman et al. 2016 – F...</div>
<div class="t" id="t64" style="left:56.50px;top:489.60px;font-size:12px;color:#1e1e1e;font-weight:700;transform:scaleX(0.9606);">3.1 Food fraud in history</div>
<div class="t" id="t65" style="left:197.00px;top:489.60px;font-size:12px;color:#8a8a8a;transform:scaleX(0.8860);">(2)</div>
<div class="a" style="left:17px;top:505px;width:262px;height:13px;overflow:hidden"><div class="t" id="t66" style="left:71.50px;top:3.60px;font-size:12px;color:#1e1e1e;transform:scaleX(0.9518);">Braden 2014 – Food fraud and ad...</div></div>
<div class="t" id="t67" style="left:29.00px;top:538.50px;font-size:12px;color:#1e1e1e;transform:scaleX(0.9736);">Toci, Aline Theodoro; Farah, Adriana; Pezza,</div>
<div class="t" id="t68" style="left:29.00px;top:553.50px;font-size:12px;color:#1e1e1e;transform:scaleX(0.9517);">Helena Redigolo; Pezza, Leonardo (2016):</div>
<div class="t" id="t69" style="left:29.00px;top:568.50px;font-size:12px;color:#1e1e1e;">Coffee adulteration. More than two decades of</div>
<div class="t" id="t70" style="left:29.00px;top:583.80px;font-size:12px;color:#1e1e1e;transform:scaleX(0.9639);">research. In <i>Crit. Rev. Anal. Chem.</i> 46 (2), pp.</div>
<div class="t" id="t71" style="left:29.00px;top:598.80px;font-size:12px;color:#1e1e1e;transform:scaleX(0.9106);">83–92. DOI: 10.1080/10408347.2014.966185.</div>
<div class="a" style="left:17px;top:630px;width:260px;height:19px;overflow:hidden"><div class="t" id="t72" style="left:12.00px;top:7.00px;font-size:12px;color:#1e1e1e;transform:scaleX(0.9888);">Whitworth, Elizabeth; Druckman, Angela;</div></div>
<div class="t" id="t73" style="left:187.30px;top:664.10px;font-size:12px;color:#2f74d0;transform:scaleX(0.9815);">Citavi Default Style</div>
<div class="a" style="left:403px;top:213px;width:200px;height:20px;overflow:hidden"><div class="t" id="t74" style="left:93.50px;top:-7.96px;font-size:13.6px;color:#111;transform:scaleX(0.9478);">pp. 000)·¶</div></div>
<div class="t" id="t75" style="left:496.50px;top:235.64px;font-size:13.6px;color:#111;transform:scaleX(0.9896);">Definitions··¶</div>
<div class="t" id="t76" style="left:496.60px;top:266.04px;font-size:13.6px;color:#111;transform:scaleX(1.0393);">¶</div>
<div class="t" id="t77" style="left:496.60px;top:296.04px;font-size:13.6px;color:#111;transform:scaleX(1.0393);">¶</div>
<div class="t" id="t78" style="left:496.60px;top:349.04px;font-size:13.6px;color:#111;transform:scaleX(1.0393);">¶</div>
<div class="t" id="t79" style="left:496.60px;top:378.84px;font-size:13.6px;color:#111;transform:scaleX(1.0393);">¶</div>
<div class="t" id="t80" style="left:496.60px;top:472.64px;font-size:13.6px;color:#111;transform:scaleX(1.0393);">¶</div>
<div class="t" id="t81" style="left:496.60px;top:526.04px;font-size:13.6px;color:#111;transform:scaleX(1.0393);">¶</div>
<div class="t" id="t82" style="left:496.60px;top:555.84px;font-size:13.6px;color:#111;transform:scaleX(1.0393);">¶</div>
<div class="t" id="t83" style="left:496.40px;top:326.96px;font-size:16.4px;color:#3a62a8;transform:scaleX(0.9036);">2.1</div>
<div class="t" id="t84" style="left:535.00px;top:326.96px;font-size:16.4px;color:#3a62a8;transform:scaleX(0.9520);">Emerging·study·of·food·fraud¶</div>
<div class="t" id="t85" style="left:496.40px;top:415.71px;font-size:18.7px;color:#3a62a8;transform:scaleX(0.8649);">3</div>
<div class="t" id="t86" style="left:525.00px;top:415.71px;font-size:18.7px;color:#3a62a8;transform:scaleX(1.0055);">Cases·of·food·fraud¶</div>
<div class="t" id="t87" style="left:496.50px;top:440.54px;font-size:13.6px;color:#111;transform:scaleX(0.9813);">(Toci·et·al.·2016;·Whitworth·et·al.·2016)</div>
<div class="t" id="t88" style="left:734.00px;top:440.54px;font-size:13.6px;color:#111;transform:scaleX(0.9119);">·¶</div>
<div class="t" id="t89" style="left:496.40px;top:502.46px;font-size:16.4px;color:#3a62a8;transform:scaleX(0.9036);">3.1</div>
<div class="t" id="t90" style="left:535.00px;top:502.46px;font-size:16.4px;color:#3a62a8;transform:scaleX(0.9513);">Food·fraud·in·history¶</div>
<div class="t" id="t91" style="left:496.40px;top:585.66px;font-size:16.4px;color:#3a62a8;transform:scaleX(0.9036);">3.2</div>
<div class="t" id="t92" style="left:535.00px;top:585.66px;font-size:16.4px;color:#3a62a8;transform:scaleX(0.9438);">Foods·most·susceptible·to·fraud¶</div>
<div class="t" id="t93" style="left:496.50px;top:607.14px;font-size:13.6px;color:#111;transform:scaleX(0.9832);">“In·general,·foods·and·food·ingredients·commonly·associated·with·food·fraud·include·oil,·fish,·honey,·</div>
<div class="t" id="t94" style="left:496.50px;top:626.64px;font-size:13.6px;color:#111;transform:scaleX(0.9726);">milk·and·dairy·products,·meat·products,·grain-based·foods,·fruit·juices,·wine·and·alcoholic·beverages,·</div>
<div class="t" id="t95" style="left:496.50px;top:646.14px;font-size:13.6px;color:#111;transform:scaleX(0.9611);">organic·foods,·spices,·coffee,·tea,·and·some·highly·processed·foods.”·</div>
<div class="t" id="t96" style="left:909.20px;top:646.14px;font-size:13.6px;color:#111;transform:scaleX(0.9507);">(Hong·et·al.·[in·press])</div>
<div class="t" id="t97" style="left:1040.50px;top:646.14px;font-size:13.6px;color:#111;transform:scaleX(0.9119);">·¶</div>
<div class="a" style="left:403px;top:670px;width:100px;height:17px;overflow:hidden"><div class="t" id="t98" style="left:93.60px;top:6.64px;font-size:13.6px;color:#111;transform:scaleX(1.0393);">¶</div></div>
<div class="t" id="t99" style="left:14.80px;top:696.30px;font-size:12px;color:#444;transform:scaleX(0.9277);">Seite 1 von 5</div>
<div class="t" id="t100" style="left:110.80px;top:696.30px;font-size:12px;color:#444;transform:scaleX(0.9603);">541 Wörter</div>
<div class="t" id="t101" style="left:246.80px;top:696.30px;font-size:12px;color:#444;transform:scaleX(0.9498);">Englisch (Vereinigte Staaten)</div>
<div class="t" id="t102" style="left:1224.00px;top:696.80px;font-size:12px;color:#444;transform:scaleX(0.8669);">100 %</div>
<svg class="L" width="1280" height="720" viewBox="0 0 1280 720"></svg>
</body></html>
